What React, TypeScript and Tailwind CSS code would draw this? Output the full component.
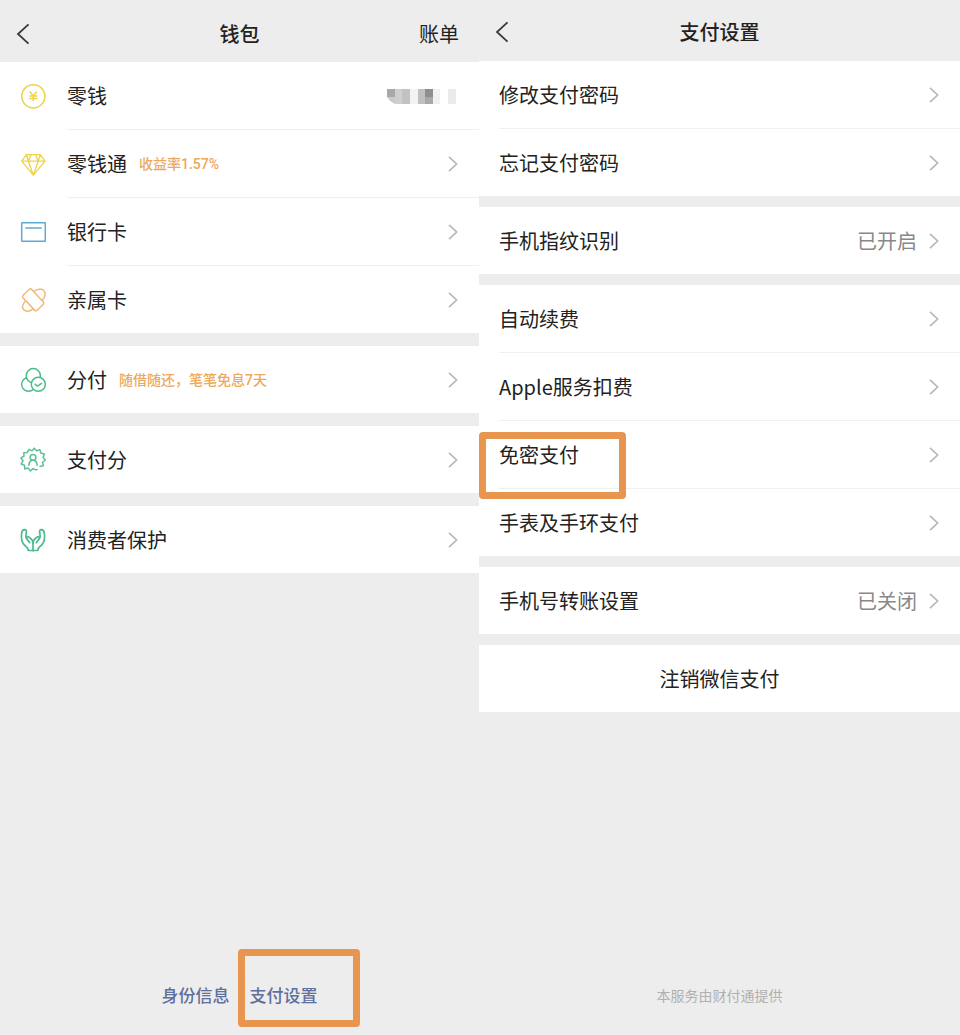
import type { ReactNode } from "react";

interface RowProps {
  label: string;
  icon?: ReactNode;
  tag?: string;
  value?: ReactNode;
  divider?: boolean;
  arrow?: boolean;
  highlight?: boolean;
}

const iconProps = {
  width: 26,
  height: 26,
  viewBox: "0 0 26 26",
  fill: "none",
  strokeWidth: 1.5,
  strokeLinejoin: "round",
  strokeLinecap: "round",
  "aria-hidden": true,
} as const;

const CoinIcon = () => (
  <svg {...iconProps} stroke="#ecd34a">
    <circle cx="13.3" cy="13.3" r="11.6" />
    <path d="M10.200 9l3.100 4 3.100-4M13.300 13v4.800M9.800 13h7M9.800 15.400h7" />
  </svg>
);

const DiamondIcon = () => (
  <svg {...iconProps} stroke="#ecd34a" strokeWidth={1.3}>
    <path d="M6.400 3.700h13.800l4.800 6.500L13.300 24.200 1.700 10.200zM1.700 10.200H25M8.400 10.200l4.900 14 4.900-14M6.400 3.700l2 6.500 2.600-6.500M15.600 3.700l2.600 6.500 2-6.500" />
  </svg>
);

const BankCardIcon = () => (
  <svg {...iconProps} stroke="#5fa9d3">
    <rect x="1.7" y="3.700" width="23.600" height="18.600" rx="0.5" />
    <path d="M5.800 9h15.400" />
  </svg>
);

const FamilyCardIcon = () => (
  <svg {...iconProps} stroke="#efb976">
    <rect x="7.200" y="2.600" width="12" height="20.500" rx="1.800" transform="rotate(-43 13.200 12.900)" />
    <path d="M14 4.400c3.400-2.400 7.600-2.900 9.600-.9 2.100 2.100 1.700 6.200-1.300 10.200" />
    <path d="M4.800 14.600c-2.400 3.200-2.900 6.400-1 8.200 2 1.900 5.900 1.400 9.400-1" />
  </svg>
);

// Later circles are filled so that they cover the ones behind
const CirclesIcon = () => (
  <svg {...iconProps} stroke="#4cbc8c">
    <circle cx="8.500" cy="17.300" r="6.900" />
    <circle cx="13.300" cy="8.700" r="7.100" fill="#fff" />
    <circle cx="18.300" cy="17.300" r="7" fill="#fff" />
    <path d="M15.200 17.200l2.200 1.900 4.200-2.800" />
  </svg>
);

const ScoreIcon = () => (
  <svg {...iconProps} stroke="#5cc094">
    <path d="M17 22.600l-1.600.2-2.400-1.200-2.500 2.400-2.300-2.900-3.400.8-.3-3.600-3.300-1.300L3 13.800.9 11 4 9.200l-.2-3.500 3.500-.1L9 2.400l3 1.500L14.200 1.200l2.500 2.500 3.300-1 .8 3.400 3.500.8-1.200 3.300 2.200 2.800-2.700 2.300.7 3.500-3.300.6" />
    <circle cx="13" cy="10.400" r="2.900" />
    <path d="M8.800 18.200c.2-2.600 1.200-4.200 2.900-5M17.200 18.200c-.2-2.600-1.200-4.200-2.900-5" />
  </svg>
);

const HandsIcon = () => (
  <svg {...iconProps} stroke="#4cbc8c" strokeWidth={1.7}>
    <path d="M4.600 2.600c-1.900 0-2.600 1.400-2.900 3.400-.6 4-.3 7.600 1.300 10.200 1.300 2 3.600 3.600 4.900 5.300v1c0 .6.4 1 1 1H13" />
    <path d="M4.600 2.600c1.400 0 2 .8 1.800 2.200l-.6 4.900 1.200 2.100" />
    <path d="M9.800 15.600l-3.200-3.800c-.8-1.200.5-2.600 2-1.800 2.600 1.400 4.400 3.600 4.400 6.500v7" />
    <path d="M21.400 2.600c1.900 0 2.600 1.400 2.900 3.400.6 4 .3 7.600-1.300 10.200-1.300 2-3.600 3.600-4.900 5.300v1c0 .6-.4 1-1 1H13" />
    <path d="M21.400 2.600c-1.400 0-2 .8-1.800 2.200l.6 4.900-1.200 2.100" />
    <path d="M16.200 15.600l3.200-3.800c.8-1.200-.5-2.600-2-1.800-2.600 1.400-4.400 3.600-4.400 6.500" />
  </svg>
);

const MaskedBalance = () => (
  <svg width="72" height="20" viewBox="0 0 72 20" role="img" aria-label="余额已隐藏">
    <path d="M0 3h8v15L3 15 0 11z" fill="#cacaca" />
    <path d="M0 3h8v8H0z" fill="#a8a8a8" />
    <path d="M8 3h7v15H8z" fill="#cfcfcf" />
    <path d="M15 3h8v15h-8z" fill="#c2c2c2" />
    <path d="M23 3h8v15h-8z" fill="#f3f3f3" />
    <path d="M31 3h7v15h-7z" fill="#c0c0c0" />
    <path d="M38 3h8v8h-8z" fill="#8e8e8e" />
    <path d="M38 11h8v7h-8z" fill="#a8a8a8" />
    <path d="M46 3h7v15h-7z" fill="#f0f0f0" />
    <path d="M61 3h8v15h-8z" fill="#ebebeb" />
  </svg>
);

const Chevron = () => (
  <svg width="12" height="18" viewBox="0 0 12 18" fill="none" stroke="#b8b8b8" strokeWidth="1.7" aria-hidden="true">
    <path d="M2 1.800L9.600 9 2 16.200" />
  </svg>
);

const BackButton = () => (
  <button type="button" aria-label="返回" className="w-[14px]">
    <svg width="14" height="22" viewBox="0 0 14 22" fill="none" stroke="#3a3a3a" strokeWidth="1.800" aria-hidden="true">
      <path d="M12.500 1.300L2 11l10.500 9.700" />
    </svg>
  </button>
);

function Row({ label, icon, tag, value, divider, arrow = true, highlight }: RowProps) {
  return (
    <li className="relative">
      <button type="button" className="flex w-full items-stretch bg-white pl-5 text-left">
        {icon && <span className="flex w-[47px] shrink-0 items-center">{icon}</span>}
        <span
          className={
            divider
              ? "flex h-[68px] flex-1 items-center border-b border-[#f0f0f0] pr-5"
              : "flex h-[67px] flex-1 items-center pr-5"
          }
        >
          <span>{label}</span>
          {tag && (
            <span className="ml-3 font-[Roboto,'Noto_Sans_CJK_SC',sans-serif] text-[14px] leading-5 font-medium text-[#eda85b]">
              {tag}
            </span>
          )}
          <span className="ml-auto flex items-center gap-[11px] text-[#888888]">
            {value}
            {arrow && <Chevron />}
          </span>
        </span>
      </button>
      {highlight && (
        <span className="pointer-events-none absolute top-[11px] left-0 z-10 h-[67px] w-[147px] rounded-[4px] border-[7px] border-[#e8954f]" />
      )}
    </li>
  );
}

function Wallet() {
  return (
    <section className="flex flex-col">
      <header className="grid h-[62px] grid-cols-3 items-center px-4 pt-1.5">
        <BackButton />
        <h1 className="text-center font-medium">钱包</h1>
        <button type="button" className="justify-self-end pr-1">
          账单
        </button>
      </header>

      <div className="flex flex-col gap-[13px]">
        <ul>
          <Row label="零钱" icon={<CoinIcon />} value={<MaskedBalance />} arrow={false} divider />
          <Row label="零钱通" icon={<DiamondIcon />} tag="收益率1.57%" divider />
          <Row label="银行卡" icon={<BankCardIcon />} divider />
          <Row label="亲属卡" icon={<FamilyCardIcon />} />
        </ul>
        <ul>
          <Row label="分付" icon={<CirclesIcon />} tag="随借随还，笔笔免息7天" />
        </ul>
        <ul>
          <Row label="支付分" icon={<ScoreIcon />} />
        </ul>
        <ul>
          <Row label="消费者保护" icon={<HandsIcon />} />
        </ul>
      </div>

      <footer className="mt-auto flex justify-center gap-5 pb-7 text-[17px] leading-6 font-medium text-[#5f6f9e]">
        <a href="#identity">身份信息</a>
        <a href="#settings" className="relative">
          支付设置
          <span className="pointer-events-none absolute -top-[34px] -left-3 h-[78px] w-[122px] rounded-[4px] border-[7px] border-[#e8954f]" />
        </a>
      </footer>
    </section>
  );
}

function PaymentSettings() {
  return (
    <section className="flex flex-col">
      <header className="grid h-[61px] grid-cols-3 items-center px-4 pt-0.5">
        <BackButton />
        <h1 className="text-center font-medium">支付设置</h1>
      </header>

      <div className="flex flex-col gap-[11px]">
        <ul>
          <Row label="修改支付密码" divider />
          <Row label="忘记支付密码" />
        </ul>
        <ul>
          <Row label="手机指纹识别" value="已开启" />
        </ul>
        <ul>
          <Row label="自动续费" divider />
          <Row label="Apple服务扣费" divider />
          <Row label="免密支付" divider highlight />
          <Row label="手表及手环支付" />
        </ul>
        <ul>
          <Row label="手机号转账设置" value="已关闭" />
        </ul>
        <button type="button" className="h-[67px] bg-white">
          注销微信支付
        </button>
      </div>

      <footer className="mt-auto pb-[30px] text-center text-[14px] leading-5 text-[#b0b0b0]">本服务由财付通提供</footer>
    </section>
  );
}

export default function App() {
  return (
    <main className="grid min-h-screen grid-cols-[479fr_481fr] bg-[#ededed] font-['Noto_Sans_CJK_SC',sans-serif] text-[20px] leading-7 text-[#222222]">
      <Wallet />
      <PaymentSettings />
    </main>
  );
}
